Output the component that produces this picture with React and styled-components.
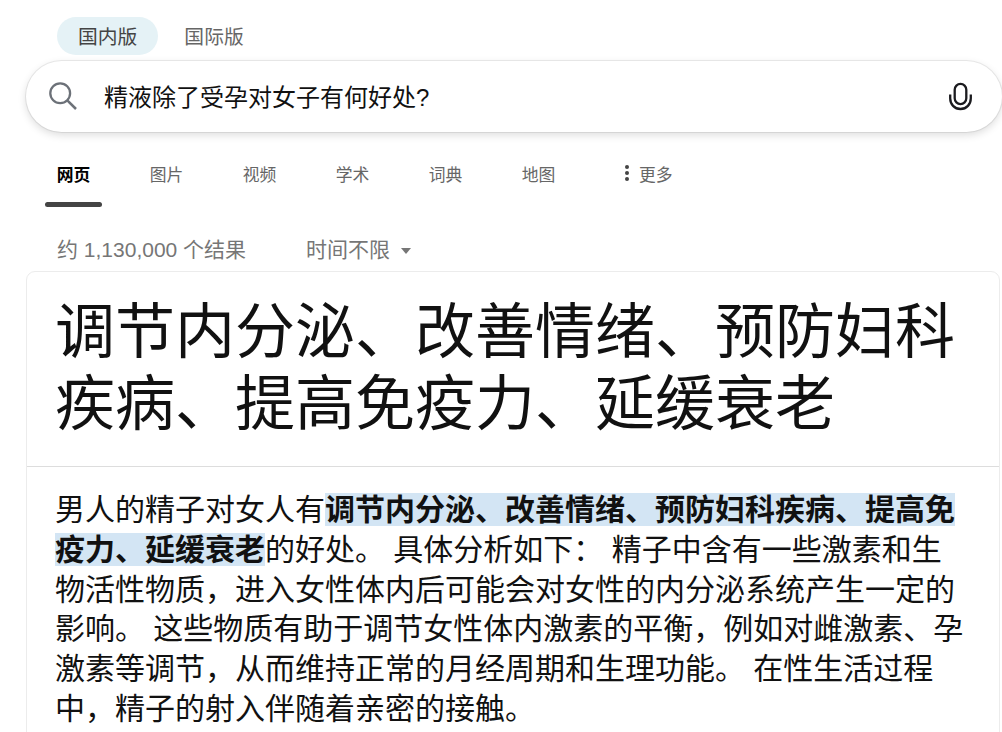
import React from "react";
import styled, { createGlobalStyle } from "styled-components";

const tabs = ["网页", "图片", "视频", "学术", "词典", "地图"];

function SearchIcon() {
  return (
    <svg width="28" height="28" viewBox="0 0 28 28" fill="none">
      <circle cx="11.2" cy="11.2" r="9.9" stroke="#6c7178" strokeWidth="2.3" />
      <path d="M18.3 18.3L27 27" stroke="#6c7178" strokeWidth="2.5" />
    </svg>
  );
}

function MicIcon() {
  return (
    <svg width="24" height="29" viewBox="0 0 24 29" fill="none">
      <rect x="6.7" y="1.9" width="11.6" height="20.2" rx="5.8" stroke="#1b1b1f" strokeWidth="2.3" />
      <path
        d="M2.2 12.5v3.7c0 6 4.2 10.800 10.300 10.800S22.800 22.200 22.800 16.200V12.500"
        stroke="#1b1b1f"
        strokeWidth="2.3"
      />
    </svg>
  );
}

export default function App() {
  return (
    <Page>
      <GlobalStyle />
      <Header>
        <Editions>
          <Edition $active>国内版</Edition>
          <Edition>国际版</Edition>
        </Editions>
        <SearchBox>
          <SearchIcon />
          <Query>精液除了受孕对女子有何好处?</Query>
          <MicIcon />
        </SearchBox>
      </Header>
      <Nav>
        {tabs.map((tab, i) => (
          <Tab key={tab} $active={i === 0}>
            {tab}
          </Tab>
        ))}
        <More>
          <Dots>
            <i />
            <i />
            <i />
          </Dots>
          更多
        </More>
      </Nav>
      <ResultBar>
        <span>约 1,130,000 个结果</span>
        <TimeFilter>
          时间不限
          <Caret />
        </TimeFilter>
      </ResultBar>
      <Card>
        <Title>调节内分泌、改善情绪、预防妇科疾病、提高免疫力、延缓衰老</Title>
        <Answer>
          男人的精子对女人有
          <strong>调节内分泌、改善情绪、预防妇科疾病、提高免疫力、延缓衰老</strong>
          的好处。 具体分析如下： 精子中含有一些激素和生物活性物质，进入女性体内后可能会对女性的内分泌系统产生一定的影响。
          这些物质有助于调节女性体内激素的平衡，例如对雌激素、孕激素等调节，从而维持正常的月经周期和生理功能。
          在性生活过程中，精子的射入伴随着亲密的接触。
        </Answer>
      </Card>
    </Page>
  );
}

const GlobalStyle = createGlobalStyle`
  * {
    box-sizing: border-box;
  }
  body {
    margin: 0;
    background: #fff;
    font-family: "Liberation Sans", "Noto Sans CJK SC", sans-serif;
  }
`;

const Page = styled.div`
  height: 732px;
  overflow: hidden;
`;

const Header = styled.header`
  padding: 17px 0 0 26px;
`;

const Editions = styled.div`
  display: flex;
  gap: 5px;
  padding-left: 31px;
`;

const Edition = styled.div`
  height: 38px;
  padding: 0 21px;
  border-radius: 19px;
  line-height: 40px;
  font-size: 19.8px;
  color: ${(props) => (props.$active ? "#444" : "#666")};
  background: ${(props) => (props.$active ? "#e5f2f6" : "transparent")};
`;

const SearchBox = styled.div`
  display: flex;
  align-items: center;
  height: 71px;
  margin-top: 6px;
  padding: 0 30px 1px 23px;
  border-radius: 36px;
  background: #fff;
  box-shadow: 0 0 0 1px rgba(0, 0, 0, 0.07), 0 3px 8px rgba(0, 0, 0, 0.14);
`;

const Query = styled.div`
  flex: 1;
  padding: 3px 0 0 27px;
  font-size: 24px;
  line-height: 36px;
  color: #111;
`;

const Nav = styled.nav`
  display: flex;
  height: 75px;
  padding: 29px 0 0 45px;
  font-size: 16.8px;
  line-height: 30px;
`;

const Tab = styled.div`
  width: 57px;
  height: 46px;
  margin-right: 36px;
  text-align: center;
  color: ${(props) => (props.$active ? "#000" : "#666")};
  font-weight: ${(props) => (props.$active ? 700 : 400)};

  &::after {
    content: "";
    display: block;
    height: 5px;
    margin-top: 11px;
    border-radius: 3px;
    background: ${(props) => (props.$active ? "#444" : "transparent")};
  }
`;

const More = styled.div`
  display: flex;
  gap: 10px;
  margin-left: 22px;
  color: #666;
`;

const Dots = styled.div`
  display: flex;
  flex-direction: column;
  gap: 2px;
  padding-top: 4px;

  i {
    width: 4px;
    height: 4px;
    border-radius: 50%;
    background: #444;
  }
`;

const ResultBar = styled.div`
  display: flex;
  gap: 60px;
  height: 64px;
  padding: 27px 0 0 57px;
  font-size: 21px;
  line-height: 32px;
  color: #767676;
`;

const TimeFilter = styled.div`
  display: flex;
  align-items: center;
  height: 32px;
  gap: 11px;
`;

const Caret = styled.span`
  margin-top: 2px;
  border: 5px solid transparent;
  border-top: 6px solid #767676;
  border-bottom: 0;
`;

const Card = styled.main`
  width: 974px;
  height: 480px;
  margin-left: 26px;
  border: 1px solid #ececec;
  border-radius: 9px;
  color: #111;
`;

const Title = styled.h1`
  height: 195px;
  margin: 0;
  padding: 25px 40px 0 28px;
  border-bottom: 1px solid #ddd;
  font-size: 60px;
  font-weight: 400;
  line-height: 72px;
`;

const Answer = styled.p`
  margin: 0;
  padding: 23px 28px 0;
  font-size: 30px;
  line-height: 39.8px;

  strong {
    background: #d3e5f4;
  }
`;
